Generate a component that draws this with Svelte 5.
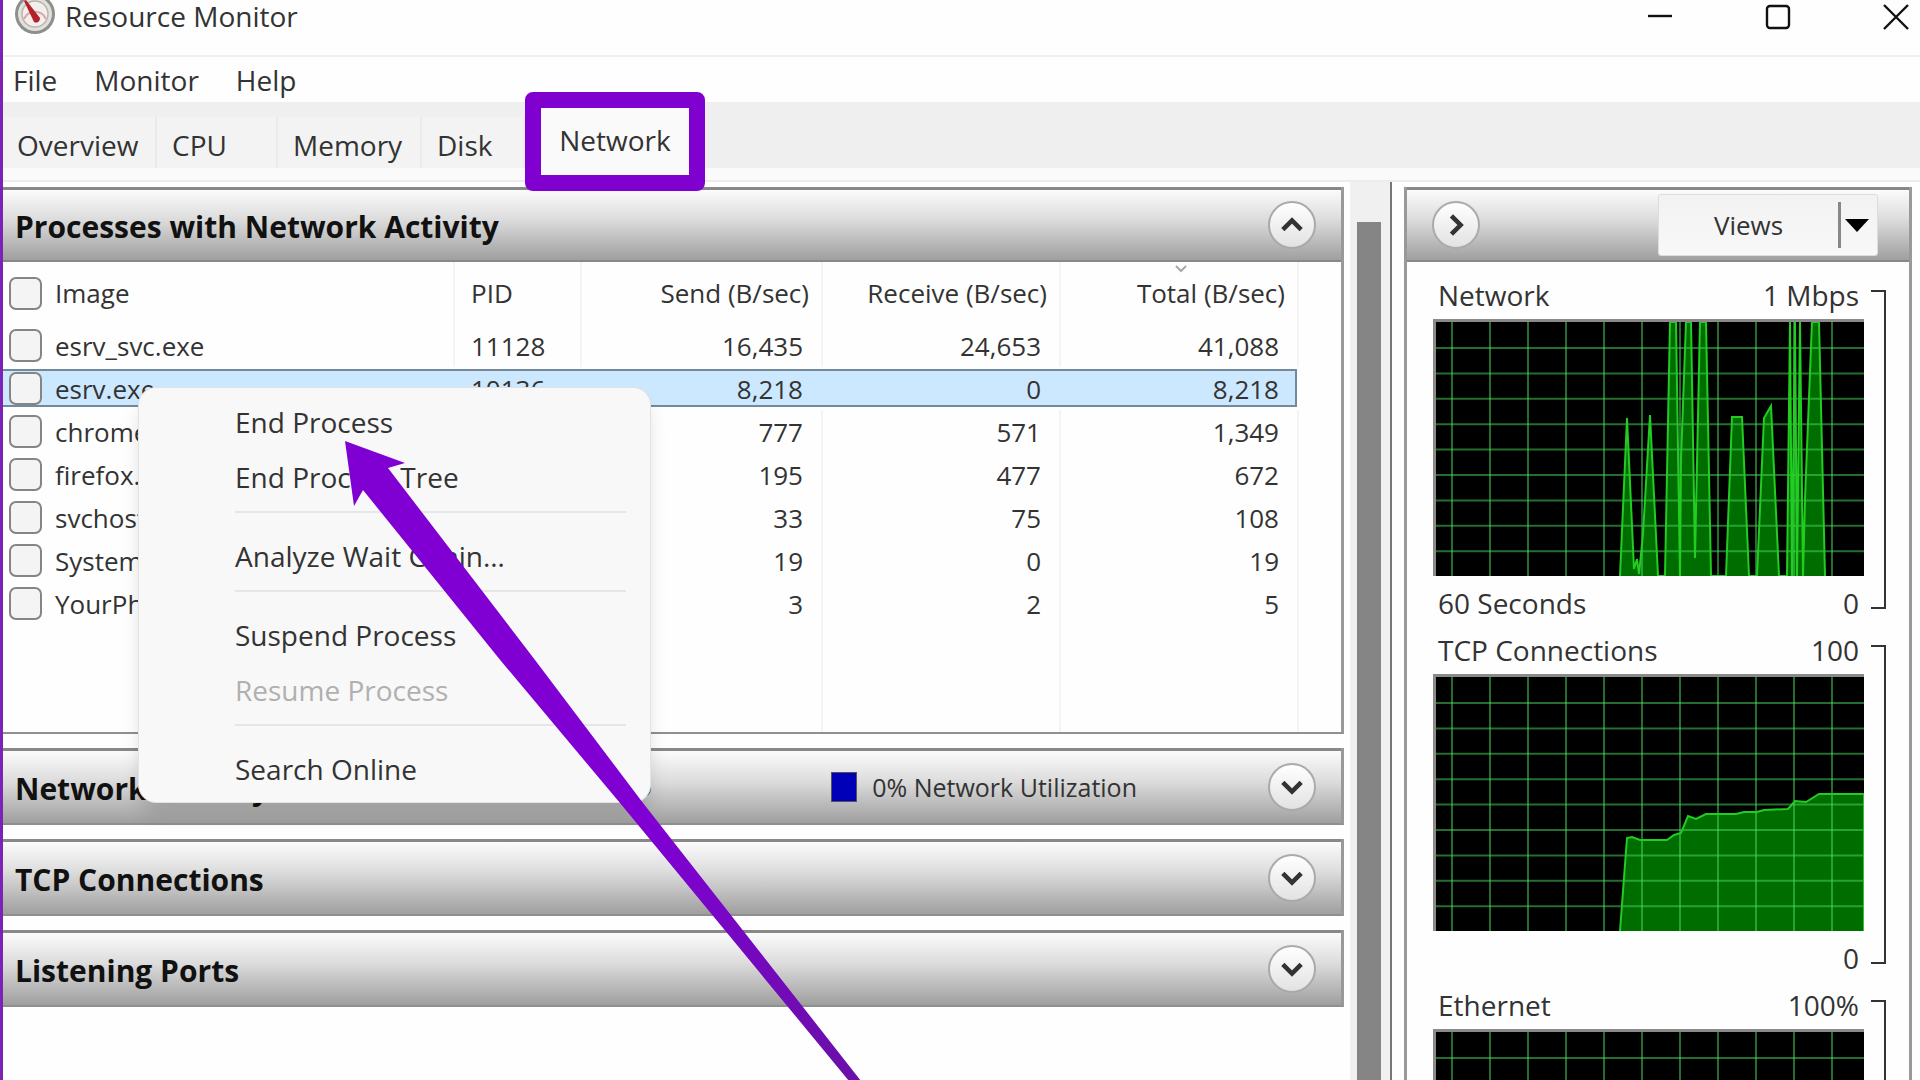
<script lang="ts">
	type Process = {
		image: string;
		pid?: string;
		send: string;
		receive: string;
		total: string;
	};

	const menus = ['File', 'Monitor', 'Help'];
	const tabs = ['Overview', 'CPU', 'Memory', 'Disk', 'Network'];

	const processes: Process[] = [
		{ image: 'esrv_svc.exe', pid: '11128', send: '16,435', receive: '24,653', total: '41,088' },
		{ image: 'esrv.exe', pid: '10136', send: '8,218', receive: '0', total: '8,218' },
		{ image: 'chrome.exe', send: '777', receive: '571', total: '1,349' },
		{ image: 'firefox.exe', send: '195', receive: '477', total: '672' },
		{ image: 'svchost', send: '33', receive: '75', total: '108' },
		{ image: 'System', send: '19', receive: '0', total: '19' },
		{ image: 'YourPh', send: '3', receive: '2', total: '5' }
	];

	const charts = [
		{
			name: 'Network',
			max: '1 Mbps',
			min: '0',
			span: '60 Seconds',
			points:
				'187,257 194,99 201,250 204,240 206,255 210,215 217,96 225,257 232,257 237,3 243,3 247,257 248,140 253,3 258,3 262,239 267,3 273,3 278,257 293,257 299,98 309,98 316,257 324,257 331,99 338,87 346,257 354,257 357,3 359,257 362,3 364,257 367,3 370,257 372,180 379,3 386,3 392,257'
		},
		{
			name: 'TCP Connections',
			max: '100',
			min: '0',
			span: '',
			points:
				'187,257 194,164 199,163 207,166 234,166 241,161 248,159 255,142 263,145 273,140 303,140 311,138 324,138 331,136 355,135 362,127 373,128 386,120 431,120 431,257'
		},
		{ name: 'Ethernet', max: '100%', min: '', span: '', points: '' }
	];

	const cols = Array.from({ length: 11 }, (_, i) => 19 + i * 38);
	const rows = Array.from({ length: 9 }, (_, i) => 29 + i * 25.4);

	let activeTab = $state('Network');
	let selected = $state('esrv.exe');
</script>

{#snippet chevron(dir: 'up' | 'down' | 'right')}
	<svg class="chevron {dir}" viewBox="0 0 48 48" aria-hidden="true">
		<path d="M14 19 L24 29 L34 19" fill="none" stroke="#333" stroke-width="5" />
	</svg>
{/snippet}

<div class="window">
	<header class="titlebar">
		<svg class="app-icon" viewBox="0 6 42 36" aria-hidden="true">
			<circle cx="21" cy="20" r="20" fill="#8d8f8d" />
			<circle cx="21" cy="20" r="17" fill="#e2e0da" />
			<circle cx="21" cy="20" r="13" fill="#f4efec" stroke="#b9b5b0" stroke-width="1.5" />
			<path d="M10 25 A12 12 0 0 1 32 25" fill="none" stroke="#d8aaa4" stroke-width="2" />
			<path d="M10 7 L12 6 L26 24 A4 4 0 0 1 20 28 Z" fill="#b3222b" />
		</svg>
		<h1>Resource Monitor</h1>
		<div class="win-buttons">
			<button aria-label="Minimize">
				<svg viewBox="0 0 26 26"><path d="M1 12 H25" /></svg>
			</button>
			<button aria-label="Maximize">
				<svg viewBox="0 0 26 26"><rect x="2" y="2" width="22" height="22" rx="3" /></svg>
			</button>
			<button aria-label="Close">
				<svg viewBox="0 0 26 26"><path d="M1 1 L25 25 M25 1 L1 25" /></svg>
			</button>
		</div>
	</header>

	<nav class="menubar">
		{#each menus as menu}
			<button>{menu}</button>
		{/each}
	</nav>

	<div class="tabs" role="tablist">
		{#each tabs as tab}
			<button
				role="tab"
				class="tab tab-{tab.toLowerCase()}"
				aria-selected={tab === activeTab}
				onclick={() => (activeTab = tab)}
			>
				<span>{tab}</span>
			</button>
		{/each}
	</div>

	<div class="content">
		<main>
			<section class="panel">
				<div class="bar">
					<h2>Processes with Network Activity</h2>
					<button class="round" aria-label="Collapse processes">{@render chevron('up')}</button>
				</div>
				<table>
					<colgroup>
						<col class="c-image" />
						<col class="c-pid" />
						<col class="c-send" />
						<col class="c-num" />
						<col class="c-num" />
						<col />
					</colgroup>
					<thead>
						<tr>
							<th>
								<label><input type="checkbox" />Image</label>
							</th>
							<th>PID</th>
							<th class="num">Send (B/sec)</th>
							<th class="num">Receive (B/sec)</th>
							<th class="num sorted">
								Total (B/sec)
								<svg viewBox="0 0 12 8" aria-hidden="true">
									<path d="M1 1 L6 6 L11 1" fill="none" stroke="#a8a8a8" stroke-width="2" />
								</svg>
							</th>
							<th class="rest"></th>
						</tr>
					</thead>
					<tbody>
						{#each processes as p (p.image)}
							<tr class:selected={p.image === selected} onclick={() => (selected = p.image)}>
								<td>
									<label><input type="checkbox" />{p.image}</label>
								</td>
								<td>{p.pid ?? ''}</td>
								<td class="num">{p.send}</td>
								<td class="num">{p.receive}</td>
								<td class="num">{p.total}</td>
								<td class="rest"></td>
							</tr>
						{/each}
						<tr class="filler">
							<td></td><td></td><td></td><td></td><td></td><td class="rest"></td>
						</tr>
					</tbody>
				</table>
			</section>

			<section class="panel">
				<div class="bar">
					<h2>Network Activity</h2>
					<div class="legend io"><i></i>0 Kbps Network I/O</div>
					<div class="legend util"><i></i>0% Network Utilization</div>
					<button class="round" aria-label="Expand network activity">{@render chevron('down')}</button>
				</div>
			</section>

			<section class="panel">
				<div class="bar">
					<h2>TCP Connections</h2>
					<button class="round" aria-label="Expand TCP connections">{@render chevron('down')}</button>
				</div>
			</section>

			<section class="panel">
				<div class="bar">
					<h2>Listening Ports</h2>
					<button class="round" aria-label="Expand listening ports">{@render chevron('down')}</button>
				</div>
			</section>
		</main>

		<div class="scrollbar"><div class="thumb"></div></div>

		<aside>
			<div class="bar">
				<button class="round" aria-label="Hide graphs">{@render chevron('right')}</button>
				<div class="views">
					<button class="views-main">Views</button>
					<button class="views-drop" aria-label="Choose view">
						<svg viewBox="0 0 24 13"><path d="M0 0 H24 L12 13 Z" /></svg>
					</button>
				</div>
			</div>
			<div class="charts">
				{#each charts as chart (chart.name)}
					<figure>
						<figcaption><span>{chart.name}</span><span>{chart.max}</span></figcaption>
						<svg viewBox="0 0 431 257" preserveAspectRatio="none" aria-hidden="true">
							<rect width="431" height="257" fill="#000" />
							{#if chart.points}
								<polygon points={chart.points} fill="#006d00" />
							{/if}
							{#each cols as x}
								<path class="grid" d="M{x} 0 V257" />
							{/each}
							{#each rows as y}
								<path class="grid" d="M0 {y} H431" />
							{/each}
							{#if chart.points}
								<polyline class="trace" points={chart.points} />
							{/if}
							<path d="M1 257 V1 H431" fill="none" stroke="#8a8a8a" stroke-width="4" />
						</svg>
						<div class="foot"><span>{chart.span}</span><span>{chart.min}</span></div>
						<div class="bracket"></div>
					</figure>
				{/each}
			</div>
		</aside>
	</div>

	<div class="context-menu" role="menu">
		<button role="menuitem">End Process</button>
		<button role="menuitem">End Process Tree</button>
		<hr />
		<button role="menuitem">Analyze Wait Chain…</button>
		<hr />
		<button role="menuitem">Suspend Process</button>
		<button role="menuitem" disabled>Resume Process</button>
		<hr />
		<button role="menuitem">Search Online</button>
	</div>

	<svg class="arrow" viewBox="0 0 520 640" aria-hidden="true">
		<defs>
			<linearGradient id="shaft" x1="0" y1="0" x2="0" y2="1">
				<stop offset="0.6" stop-color="#8000d4" />
				<stop offset="1" stop-color="#6a10a8" />
			</linearGradient>
		</defs>
		<path d="M3 0 L63 22 L46 27 L193 219 L301 362 L519 640 H507 L278 362 L159 220 L21 49 L12 65 Z" fill="url(#shaft)" />
	</svg>
</div>

<style>
	:global(body) {
		background: #fff;
	}
	.window {
		position: relative;
		box-sizing: border-box;
		height: 100vh;
		overflow: hidden;
		display: flex;
		flex-direction: column;
		border-left: 3px solid #7d22b4;
		background: #fefefe;
		color: #333;
		font-family: 'Open Sans', 'Noto Sans', sans-serif;
		font-size: 26px;
		line-height: 34px;
	}
	button {
		padding: 0;
		border: 0;
		background: none;
		color: inherit;
		font: inherit;
	}
	h1,
	h2,
	figure {
		margin: 0;
	}

	.titlebar {
		display: flex;
		align-items: flex-start;
		height: 55px;
		padding: 0 11px;
		border-bottom: 2px solid #f0f0f0;
	}
	.app-icon {
		width: 42px;
		height: 36px;
		margin-right: 9px;
	}
	h1 {
		flex: 1;
		font-size: 28px;
		font-weight: 400;
		line-height: 32px;
	}
	.win-buttons {
		display: flex;
		gap: 92px;
		padding-top: 4px;
	}
	.win-buttons svg {
		display: block;
		width: 26px;
		height: 26px;
		fill: none;
		stroke: #111;
		stroke-width: 2.4;
	}

	.menubar {
		display: flex;
		gap: 37px;
		height: 45px;
		padding-left: 10px;
		font-size: 28px;
	}

	.tabs {
		display: flex;
		align-items: flex-end;
		height: 66px;
		background: #efefef;
		border-bottom: 12px solid #fafafa;
	}
	.tab {
		position: relative;
		box-sizing: border-box;
		height: 51px;
		padding: 4px 0 0 14px;
		border-right: 2px solid #eaeaea;
		background: #f3f3f3;
		text-align: left;
		font-size: 28px;
	}
	.tab-overview {
		width: 154px;
	}
	.tab-cpu {
		width: 121px;
		padding-left: 15px;
	}
	.tab-memory {
		width: 144px;
		padding-left: 15px;
	}
	.tab-disk {
		width: 103px;
		padding-left: 15px;
	}
	.tab-network {
		width: 180px;
		padding: 0 0 6px;
		border: 0;
		text-align: center;
	}
	.tab span {
		position: relative;
		z-index: 2;
	}
	/* Highlight frame round the Network tab */
	.tab-network::after {
		content: '';
		position: absolute;
		z-index: 1;
		inset: -25px 0 -23px;
		border: 16px solid #8000d0;
		border-radius: 8px;
		background: #fafafa;
	}

	.content {
		flex: 1;
		min-height: 0;
		display: flex;
		border-top: 2px solid #ececec;
	}
	main {
		flex: 1;
		min-width: 0;
		display: flex;
		flex-direction: column;
		gap: 14px;
		padding-top: 5px;
	}
	.panel {
		border-right: 3px solid #999;
		border-bottom: 2px solid #8f8f8f;
	}
	.bar {
		box-sizing: border-box;
		display: flex;
		align-items: center;
		height: 75px;
		padding: 0 25px 0 12px;
		border-top: 3px solid #888;
		background: linear-gradient(#fbfbfb, #dcdcdc 42%, #9f9f9f);
	}
	.panel:first-child .bar {
		border-bottom: 2px solid #888;
	}
	h2 {
		flex: 1;
		padding-top: 4px;
		color: #111;
		font-size: 30px;
		font-weight: 700;
		white-space: nowrap;
	}
	.round {
		width: 48px;
		height: 48px;
		border: 2px solid #aaa;
		border-radius: 50%;
		background: linear-gradient(#fff, #e2e2e2);
	}
	.chevron {
		display: block;
		width: 44px;
		height: 44px;
	}
	.chevron.up {
		transform: rotate(180deg);
	}
	.chevron.right {
		transform: rotate(-90deg);
	}
	.legend {
		display: flex;
		align-items: center;
		gap: 15px;
		font-size: 25px;
		white-space: nowrap;
	}
	.legend i {
		width: 24px;
		height: 28px;
		border: 1px solid #555;
	}
	.io {
		margin-right: 179px;
	}
	.io i {
		background: #0c0;
	}
	.util {
		margin-right: 131px;
	}
	.util i {
		background: #0000b8;
	}

	table {
		width: 100%;
		height: 470px;
		table-layout: fixed;
		border-collapse: separate;
		border-spacing: 0;
	}
	.c-image {
		width: 452px;
	}
	.c-pid {
		width: 127px;
	}
	.c-send {
		width: 241px;
	}
	.c-num {
		width: 238px;
	}
	th,
	td {
		box-sizing: border-box;
		height: 43px;
		padding: 0 18px 0 16px;
		border-right: 2px solid #f2f4f5;
		font-weight: 400;
		text-align: left;
		white-space: nowrap;
	}
	th {
		position: relative;
		height: 62px;
		padding-right: 12px;
	}
	th:first-child,
	td:first-child {
		padding-left: 6px;
	}
	.num {
		text-align: right;
	}
	.rest {
		border-right: 0;
	}
	.filler td {
		height: auto;
	}
	.sorted svg {
		position: absolute;
		top: 3px;
		left: 114px;
		width: 12px;
		height: 8px;
	}
	label {
		display: flex;
		align-items: center;
		gap: 13px;
	}
	input {
		appearance: none;
		box-sizing: border-box;
		width: 33px;
		height: 33px;
		margin: 0;
		border: 2px solid #858585;
		border-radius: 7px;
		background: #f4f4f4;
	}
	.selected td:not(.rest) {
		border-right-color: transparent;
		background: linear-gradient(
			transparent 2px,
			#74899a 2px 4px,
			#cce8ff 4px 38px,
			#74899a 38px 40px,
			transparent 40px
		);
		background-origin: border-box;
	}
	/* Closing edge of the focus rectangle */
	.selected td:nth-child(5) {
		background:
			linear-gradient(#74899a, #74899a) right 2px / 2px 38px no-repeat,
			linear-gradient(
				transparent 2px,
				#74899a 2px 4px,
				#cce8ff 4px 38px,
				#74899a 38px 40px,
				transparent 40px
			);
		background-clip: padding-box;
		background-origin: padding-box;
	}

	.scrollbar {
		display: flex;
		box-sizing: border-box;
		width: 48px;
		margin-right: 12px;
		padding: 40px 9px 0 13px;
		border-right: 2px solid #777;
		background: linear-gradient(90deg, #fefefe 6px, #f0f0f0 6px);
	}
	.thumb {
		flex: 1;
		background: #858585;
	}

	aside {
		box-sizing: border-box;
		width: 508px;
		margin: 5px 8px 0 0;
		border: 3px solid #999;
		border-width: 0 3px;
	}
	aside .bar {
		justify-content: space-between;
		padding: 0 31px 0 25px;
		border-bottom: 2px solid #888;
	}
	.views {
		display: flex;
		align-items: center;
		height: 60px;
		border: 1px solid #ddd;
		border-radius: 3px;
		background: linear-gradient(#f2f2f2, #f8f8f8);
	}
	.views-main {
		width: 182px;
		height: 46px;
		border-right: 3px solid #888;
	}
	.views-drop {
		width: 36px;
	}
	.views-drop svg {
		display: block;
		width: 24px;
		height: 13px;
		margin-left: 4px;
	}

	.charts {
		padding: 14px 45px 0 26px;
		font-size: 28px;
	}
	figure {
		position: relative;
		height: 355px;
		margin: 0;
	}
	figcaption,
	.foot {
		display: flex;
		justify-content: space-between;
		padding: 2px 5px 7px;
	}
	.foot {
		padding: 10px 5px 0;
	}
	figure svg {
		display: block;
		width: 100%;
		height: 257px;
	}
	.grid {
		fill: none;
		stroke: rgba(74, 220, 96, 0.5);
		stroke-width: 2;
	}
	.trace {
		fill: none;
		stroke: #22cc22;
		stroke-width: 2;
	}
	.bracket {
		position: absolute;
		top: 14px;
		right: -22px;
		width: 13px;
		height: 315px;
		border: 2px solid #333;
		border-left: 0;
	}

	.context-menu {
		position: absolute;
		top: 387px;
		left: 135px;
		box-sizing: border-box;
		width: 513px;
		padding: 6px 24px 6px 96px;
		display: flex;
		flex-direction: column;
		border: 1px solid #e2e2e2;
		border-radius: 18px;
		background: #f8f8f8;
		box-shadow: 0 14px 20px -4px rgba(0, 0, 0, 0.16);
		font-size: 28px;
	}
	.context-menu button {
		height: 55px;
		text-align: left;
	}
	.context-menu button:disabled {
		color: #b0b0b0;
	}
	hr {
		width: 100%;
		height: 2px;
		margin: 7px 0 15px;
		border: 0;
		background: #e6e6e6;
	}

	.arrow {
		position: absolute;
		top: 441px;
		left: 339px;
		width: 520px;
		height: 640px;
		pointer-events: none;
	}
</style>
